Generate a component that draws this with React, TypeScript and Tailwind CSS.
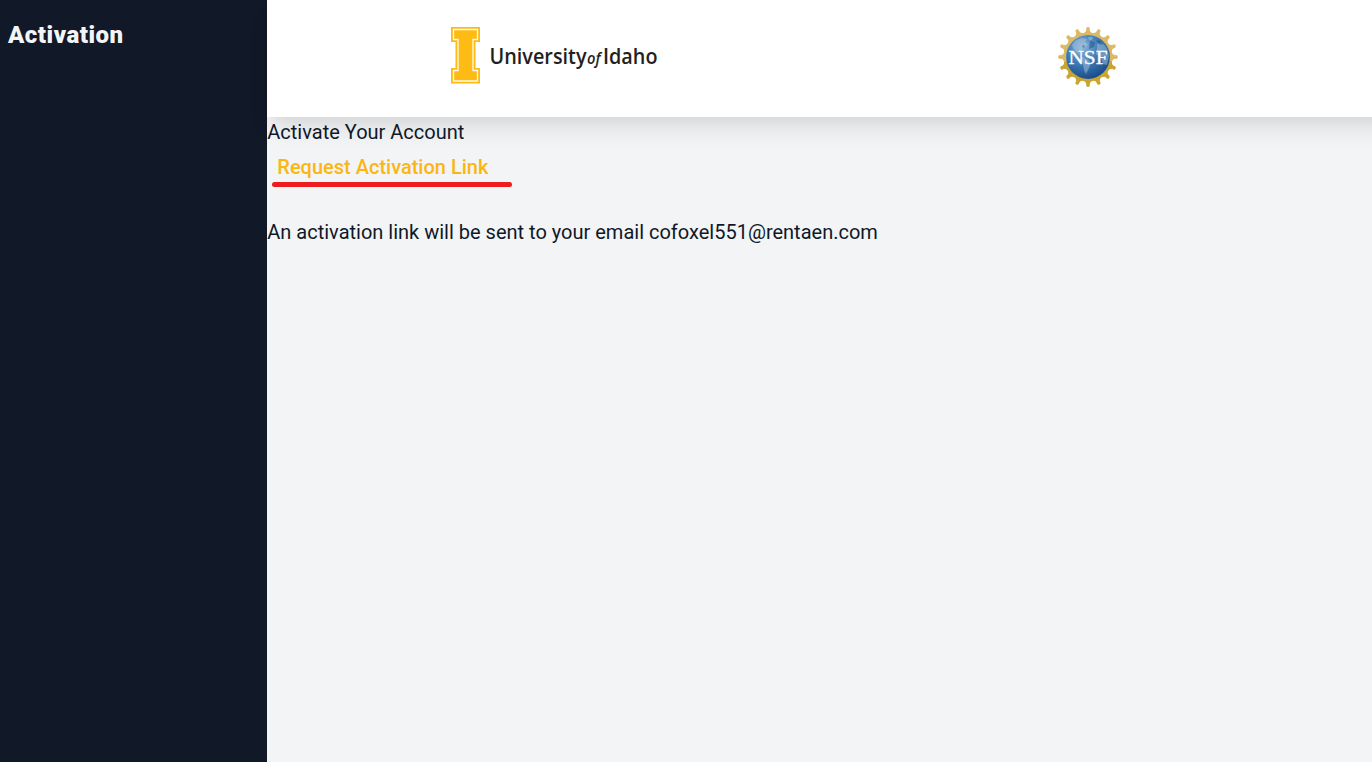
const spokes = Array.from({ length: 16 }, (_, i) => i * 22.5);

function IdahoLogo() {
  return (
    <svg width="212" height="60" viewBox="0 0 212 60" role="img" aria-label="University of Idaho">
      <path d="M1 2H30V17H25.500V43H30V58.500H1V43H5.500V17H1Z" fill="#fdbb13" />
      <path
        d="M3.500 4.500H27.500V14.500H23V45.500H27.500V56H3.500V45.500H8V14.500H3.500Z"
        fill="none"
        stroke="#fffaf0"
        strokeWidth="1.300"
      />
      <g fill="#231f20" fontFamily="'Open Sans', sans-serif" fontWeight="600">
        <text x="39.500" y="38.500" fontSize="22" textLength="97" lengthAdjust="spacingAndGlyphs">University</text>
        <text x="137" y="38.500" fontSize="16" fontStyle="italic" textLength="13.500" lengthAdjust="spacingAndGlyphs">of</text>
        <text x="153" y="38.500" fontSize="22" textLength="54.500" lengthAdjust="spacingAndGlyphs">Idaho</text>
      </g>
    </svg>
  );
}

function NsfLogo() {
  return (
    <svg width="60" height="60" viewBox="0 0 60 60" role="img" aria-label="NSF">
      <defs>
        <radialGradient id="globe" cx="38%" cy="28%" r="75%">
          <stop offset="0" stopColor="#8fb4d6" />
          <stop offset="0.450" stopColor="#4480b7" />
          <stop offset="1" stopColor="#174a88" />
        </radialGradient>
        <linearGradient id="gold" x1="0" y1="0" x2="0" y2="60" gradientUnits="userSpaceOnUse">
          <stop offset="0" stopColor="#dfbd6a" />
          <stop offset="0.500" stopColor="#d5b052" />
          <stop offset="1" stopColor="#c39a1d" />
        </linearGradient>
      </defs>
      <circle cx="30" cy="30" r="23" fill="none" stroke="url(#gold)" strokeWidth="2.400" />
      {spokes.map((a) => (
        <g key={a} transform={`rotate(${a} 30 30)`} fill={a > 90 && a < 270 ? "#c9a431" : "#dcb964"}>
          <path d="M25 6.300C27 5.500 27.800 4.800 28.200 3H31.800C32.200 4.800 33 5.500 35 6.300L34.500 8.500H25.500Z" />
          <circle cx="30" cy="2" r="1.900" />
        </g>
      ))}
      <circle cx="30" cy="30" r="21.900" fill="url(#globe)" />
      <g fill="#b4cde3" opacity="0.450">
        <path d="M14 18L18 13L24 11L29 12L27 15L30 17L28 20L25 21L23 24L20 24L22 28L18 25L15 21Z" />
        <path d="M24 30L29 32L33 36L31 41L28 47L26 43L25 37L22 33Z" />
        <path d="M39 17L44 15L49 21L51 29L49 38L45 37L43 31L38 27L39 22Z" />
        <path d="M30 10L35 10L34 13L31 13Z" />
      </g>
      <g fill="#174780" opacity="0.450">
        <path d="M32 14L37 15L36 20L31 22Z" />
        <path d="M38 13L42 14L46 17L42 18Z" />
        <path d="M25 18L27 19L26 21L24 20Z" />
      </g>
      <g fill="#ffffff" stroke="#ffffff" strokeWidth="0.300" fontFamily="'Liberation Serif', serif">
        <text x="10.500" y="36.500" fontSize="19.500" textLength="39" lengthAdjust="spacingAndGlyphs">NSF</text>
      </g>
    </svg>
  );
}

export default function App() {
  return (
    <div className="flex h-screen overflow-hidden bg-[#f2f4f6] font-['Roboto',sans-serif] text-xl leading-[30px] text-gray-900">
      <aside className="w-[267px] shrink-0 bg-[#111827] px-2 pt-[17px]">
        <h1 className="text-2xl leading-9 font-black tracking-[0.5px] text-gray-100">Activation</h1>
      </aside>
      <div className="flex min-w-0 flex-1 flex-col">
        <header className="-mr-8 grid h-[117px] shrink-0 grid-cols-[552px_1fr] bg-white pt-[25px] shadow-[0_15px_23px_-5px_rgba(0,0,0,0.1),0_8px_10px_-5px_rgba(0,0,0,0.04)]">
          <div className="pl-[183px]"><IdahoLogo /></div>
          <div className="pt-[2px] pl-[239px]"><NsfLogo /></div>
        </header>
        <main className="relative pl-[0.3px]">
          <p>Activate Your Account</p>
          <div className="h-[70px] pt-[5px] pl-[5px]">
            <button className="block px-[5px] leading-[30px] font-medium text-[#fbb614]">Request Activation Link</button>
            <div className="h-[5px] w-[240px] rounded-full bg-[#ed1c1f]" />
          </div>
          <p>An activation link will be sent to your email cofoxel551@rentaen.com</p>
        </main>
      </div>
    </div>
  );
}
